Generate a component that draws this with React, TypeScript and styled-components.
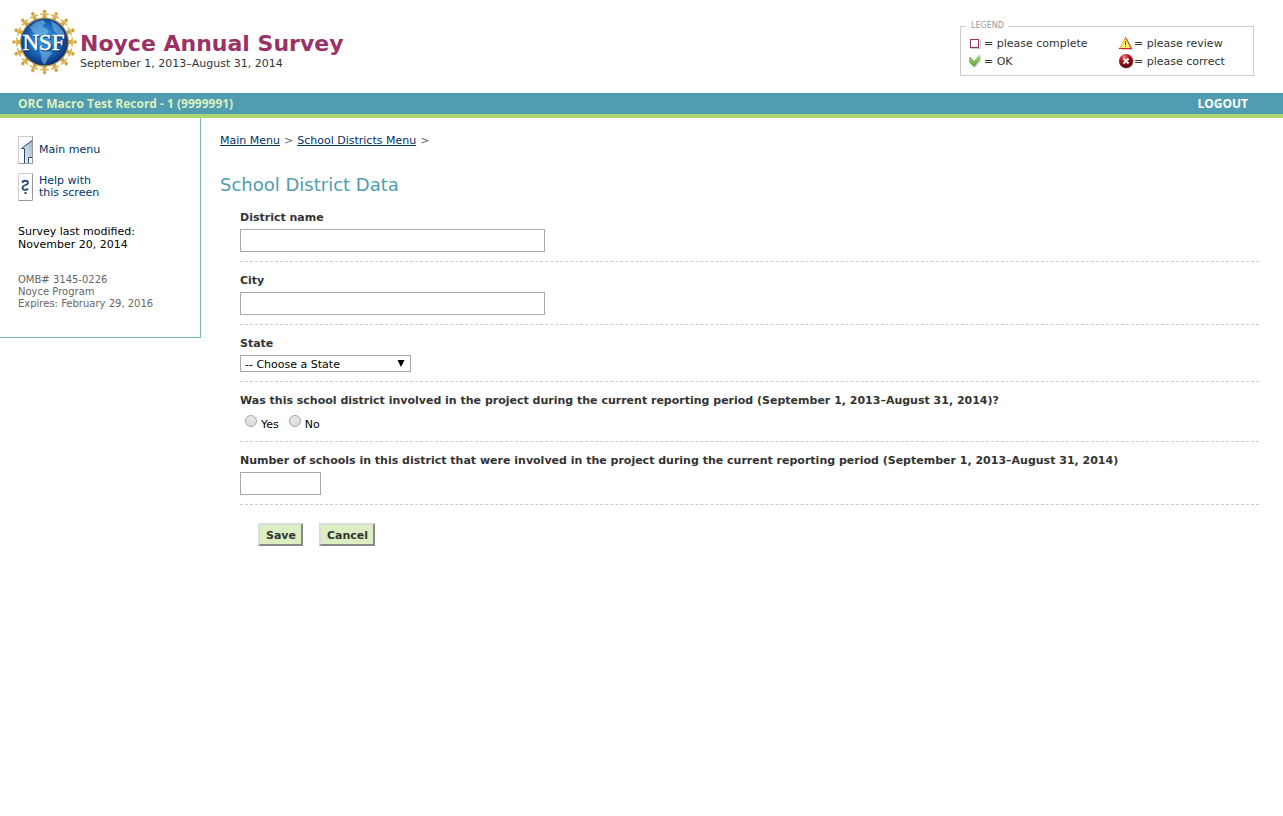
import React from "react";
import styled, { createGlobalStyle } from "styled-components";

const Global = createGlobalStyle`
  * { box-sizing: border-box; }
  body {
    margin: 0;
    background: #fff;
    color: #333;
    font: 11px/13px Verdana, "DejaVu Sans", sans-serif;
  }
  svg { flex: none; }
`;

const Header = styled.header`
  display: flex;
  justify-content: space-between;
  align-items: flex-start;
  height: 93px;
  padding: 8px 29px 0 10px;
`;

const Brand = styled.div`
  display: flex;
`;

const Titles = styled.div`
  padding: 23px 0 0 2px;
`;

const SiteTitle = styled.h1`
  margin: 0;
  color: #993366;
  font-size: 22px;
  line-height: 26px;
`;

const Period = styled.p`
  margin: 0;
`;

const Legend = styled.fieldset`
  display: grid;
  grid-template-columns: 150px auto;
  align-content: start;
  width: 294px;
  height: 57px;
  margin: 11px 0 0;
  padding: 1px 0 0 7px;
  border: 1px solid #ccc;
  color: #333;
`;

const LegendTitle = styled.legend`
  margin: 0 0 0 -2px;
  padding: 0 4px 0 5px;
  color: #999;
  font-size: 8px;
  line-height: 14px;
`;

const LegendItem = styled.div`
  display: flex;
  align-items: center;
  height: 18px;
  white-space: nowrap;
`;

const AccountBar = styled.div`
  display: flex;
  justify-content: space-between;
  align-items: center;
  height: 25px;
  padding: 0 35px 0 18px;
  border-bottom: 4px solid #acd66e;
  background: #509cb0;
  color: #dcf0c0;
  font-family: Tahoma, "Open Sans", sans-serif;
  font-size: 12px;
  font-weight: bold;
`;

const Logout = styled.a`
  color: #fff;
  text-decoration: none;
`;

const Body = styled.div`
  display: flex;
  align-items: flex-start;
`;

const Sidebar = styled.aside`
  flex: none;
  width: 201px;
  padding: 18px 18px 27px;
  border: solid #7ab8b8;
  border-width: 0 1px 1px 0;
`;

const SideLink = styled.a`
  display: flex;
  align-items: center;
  gap: 6px;
  height: 28px;
  margin-bottom: 9px;
  color: #003366;
  line-height: 12px;
  text-decoration: none;
`;

const Modified = styled.p`
  margin: 24px 0 23px;
  color: #000;
`;

const Omb = styled.p`
  margin: 0;
  color: #666;
  font-size: 10px;
  line-height: 12px;
`;

const Main = styled.main`
  flex: 1;
  min-width: 0;
  padding: 16px 24px 0 19px;
`;

const Crumbs = styled.nav`
  display: flex;
  gap: 4px;
  line-height: 14px;
  color: #666;
`;

const CrumbLink = styled.a`
  color: #003366;
`;

const PageTitle = styled.h2`
  margin: 25px 0 3px;
  color: #509cb0;
  font-size: 18px;
  font-weight: normal;
  line-height: 23px;
`;

const Form = styled.form`
  padding-left: 20px;
`;

const Row = styled.div`
  padding: 9px 0;
  border-bottom: 1px dashed #ccc;
`;

const Group = styled.fieldset`
  margin: 0;
  padding: 9px 0;
  border: 0;
  border-bottom: 1px dashed #ccc;
`;

const labelText = `
  display: block;
  margin-bottom: 1px;
  padding: 0;
  font-weight: bold;
  line-height: 20px;
`;

const Label = styled.label`${labelText}`;

const Question = styled.legend`
  ${labelText}
  float: left;
  width: 100%;
`;

const TextInput = styled.input<{ $width: number }>`
  display: block;
  width: ${(p) => p.$width}px;
  max-width: 100%;
  height: 23px;
  padding: 1px 4px;
  border: 1px solid #a9a9a9;
  background: #fff;
  font: inherit;
`;

const SelectWrap = styled.div`
  display: grid;
  align-items: center;
  width: 171px;
  height: 17px;

  > * { grid-area: 1 / 1; }
  > svg { justify-self: end; margin-right: 6px; pointer-events: none; }
`;

const Select = styled.select`
  appearance: none;
  width: 100%;
  height: 17px;
  padding: 1px 18px 0 4px;
  border: 1px solid #a9a9a9;
  border-radius: 0;
  background: #fff;
  color: #000;
  font: inherit;
`;

const Choices = styled.div`
  display: flex;
  clear: both;
  gap: 10px;
  height: 20px;
  padding-left: 5px;
  color: #000;
`;

const Choice = styled.label`
  display: flex;
  align-items: flex-start;
  gap: 4px;
  line-height: 25px;
`;

const Radio = styled.input`
  appearance: none;
  width: 12px;
  height: 12px;
  margin: 3px 0 0;
  border: 1px solid #a4a4a4;
  border-radius: 50%;
  background: linear-gradient(#e8e8e8, #dcdcdc);

  &:checked { background: radial-gradient(#444 35%, #e2e2e2 40%); }
`;

const Actions = styled.div`
  display: flex;
  gap: 16px;
  padding: 18px;
`;

const Button = styled.button`
  height: 23px;
  padding: 1px 5px 0 6px;
  border: 2px solid;
  border-color: #ddd #888 #888 #ddd;
  border-radius: 0;
  background: #dcefc3;
  color: #333;
  font: inherit;
  font-weight: bold;
`;

const figures = Array.from({ length: 16 }, (_, i) => i * 22.5);

const NsfLogo = () => (
  <svg width="68" height="68" viewBox="0 0 68 68" role="img" aria-label="NSF">
    <defs>
      <radialGradient id="globe" cx="48%" cy="45%" r="56%">
        <stop offset="0" stopColor="#48a4e4" />
        <stop offset=".55" stopColor="#1c6fc0" />
        <stop offset="1" stopColor="#0a2c72" />
      </radialGradient>
      <linearGradient id="gold" x2="0" y2="1">
        <stop offset="0" stopColor="#e4c060" />
        <stop offset="1" stopColor="#bc9030" />
      </linearGradient>
    </defs>
    {figures.map((a) => (
      <g key={a} transform={`rotate(${a} 34.500 34)`} fill="url(#gold)">
        <circle cx="34.500" cy="3.200" r="1.800" />
        <path d="M29.800 6 L34.500 4.800 L39.200 6 L39 7 L36.200 7.300 L36.400 9 L39.300 12 H29.700 L32.600 9 L32.800 7.300 L30 7Z" />
      </g>
    ))}
    <circle cx="34.500" cy="34" r="24.500" fill="#caa040" />
    <circle cx="34.500" cy="34" r="23.500" fill="url(#globe)" />
    <path d="M20 19 L26 14 L33 12 L36 15 L32 18 L37 21 L39 24 L35 27 L31 26 L30 29 L26 27 L22 23Z M41 13 L48 17 L53 23 L55 29 L49 27 L44 23Z M29 39 L36 41 L42 45 L38 50 L35 57 L32 54 L31 47Z" fill="#8cc8f0" opacity=".5" />
    <text x="34.500" y="42.500" textAnchor="middle" fill="#0b2a60" stroke="#0b2a60" strokeWidth="1" opacity=".7" fontFamily="Liberation Serif, serif" fontSize="23">NSF</text>
    <text x="33.500" y="41.500" textAnchor="middle" fill="#fff" stroke="#fff" strokeWidth=".5" fontFamily="Liberation Serif, serif" fontSize="23">NSF</text>
  </svg>
);

const CompleteIcon = () => (
  <svg width="16" height="16" viewBox="0 0 16 16" aria-hidden="true">
    <path d="M3 13.500H12.500V5" fill="none" stroke="#ccc" />
    <rect x="2.500" y="4.500" width="8" height="8" fill="#fff" stroke="#993366" />
  </svg>
);

const OkIcon = () => (
  <svg width="16" height="16" viewBox="0 0 16 16" aria-hidden="true">
    <defs>
      <linearGradient id="tick" x2="0" y2="1">
        <stop offset="0" stopColor="#b0dc88" />
        <stop offset="1" stopColor="#5c9c38" />
      </linearGradient>
    </defs>
    <path d="M2 6 L7 10 L13 3 V8 L7 15 L2 10Z" fill="#bbb" opacity=".6" />
    <path d="M1 4 L3 4 L6 8 L12 1 V7 L6 14 L1 9Z" fill="url(#tick)" />
  </svg>
);

const ReviewIcon = () => (
  <svg width="16" height="16" viewBox="0 0 16 16" aria-hidden="true">
    <path d="M9 3 L15.500 15 H3Z" fill="#bbb" opacity=".6" />
    <path d="M7.500 2.500 L13.500 13.500 H1.500Z" fill="#ffee70" />
    <path d="M1.500 13.500 L7.500 2.500" fill="none" stroke="#f0a840" />
    <path d="M7.500 2.500 L13.500 13.500 H1" fill="none" stroke="#d02820" />
    <path d="M7 6H8V10H7Z M7 11H8V12H7Z" fill="#742" />
  </svg>
);

const CorrectIcon = () => (
  <svg width="16" height="16" viewBox="0 0 16 16" aria-hidden="true">
    <defs>
      <radialGradient id="ball" cx="38%" cy="20%" r="80%">
        <stop offset="0" stopColor="#f08080" />
        <stop offset=".4" stopColor="#b81420" />
        <stop offset="1" stopColor="#500008" />
      </radialGradient>
    </defs>
    <circle cx="9" cy="9" r="7" fill="#bbb" opacity=".6" />
    <circle cx="8" cy="8" r="7" fill="url(#ball)" />
    <path d="M5.500 5.500 L10.500 10.500 M10.500 5.500 L5.500 10.500" stroke="#fff" strokeWidth="1.800" />
  </svg>
);

const HomeIcon = () => (
  <svg width="15" height="28" viewBox="0 0 15 28" aria-hidden="true">
    <defs>
      <linearGradient id="house" x1="1" x2="0" y2="1">
        <stop offset="0" stopColor="#9fb2c8" />
        <stop offset="1" stopColor="#f4f7fa" />
      </linearGradient>
    </defs>
    <path d="M.5 27.500V.5H14.500" fill="none" stroke="#ccc" />
    <path d="M.5 27.500H14.500V.5" fill="none" stroke="#999" />
    <path d="M3.500 12.500 L14 4 V21 H10 V27 H6.500 V12.500Z" fill="url(#house)" />
    <path d="M14 4.500 L3.500 12.500 H6.500 V27 M10.500 27 V21.500 H14" fill="none" stroke="#1f4a78" />
  </svg>
);

const HelpIcon = () => (
  <svg width="15" height="28" viewBox="0 0 15 28" aria-hidden="true">
    <path d="M.5 27.500V.5H14.500" fill="none" stroke="#ccc" />
    <path d="M.5 27.500H14.500V.5" fill="none" stroke="#999" />
    <path d="M4.500 10 C4.500 7 10 7 10 10 C10 12.500 4.500 11.500 4.500 14.500 C4.500 17.500 9 17.500 10 15.500" fill="none" stroke="#1f4a78" strokeWidth="1.800" />
    <path d="M6.500 19H8.500V21H6.500Z" fill="#1f4a78" />
  </svg>
);

export default function App() {
  return (
    <>
      <Global />
      <Header>
        <Brand>
          <NsfLogo />
          <Titles>
            <SiteTitle>Noyce Annual Survey</SiteTitle>
            <Period>September 1, 2013–August 31, 2014</Period>
          </Titles>
        </Brand>
        <Legend>
          <LegendTitle>LEGEND</LegendTitle>
          <LegendItem><CompleteIcon />= please complete</LegendItem>
          <LegendItem><ReviewIcon />= please review</LegendItem>
          <LegendItem><OkIcon />= OK</LegendItem>
          <LegendItem><CorrectIcon />= please correct</LegendItem>
        </Legend>
      </Header>
      <AccountBar>
        <span>ORC Macro Test Record - 1 (9999991)</span>
        <Logout href="#logout">LOGOUT</Logout>
      </AccountBar>
      <Body>
        <Sidebar>
          <SideLink href="#menu"><HomeIcon />Main menu</SideLink>
          <SideLink href="#help"><HelpIcon /><span>Help with<br />this screen</span></SideLink>
          <Modified>Survey last modified:<br />November 20, 2014</Modified>
          <Omb>OMB# 3145-0226<br />Noyce Program<br />Expires: February 29, 2016</Omb>
        </Sidebar>
        <Main>
          <Crumbs aria-label="Breadcrumb">
            <CrumbLink href="#menu">Main Menu</CrumbLink>
            <span>&gt;</span>
            <CrumbLink href="#districts">School Districts Menu</CrumbLink>
            <span>&gt;</span>
          </Crumbs>
          <PageTitle>School District Data</PageTitle>
          <Form onSubmit={(e) => e.preventDefault()}>
            <Row>
              <Label htmlFor="district">District name</Label>
              <TextInput id="district" type="text" $width={305} />
            </Row>
            <Row>
              <Label htmlFor="city">City</Label>
              <TextInput id="city" type="text" $width={305} />
            </Row>
            <Row>
              <Label htmlFor="state">State</Label>
              <SelectWrap>
                <Select id="state"><option>-- Choose a State</option></Select>
                <svg width="8" height="7" viewBox="0 0 8 7" aria-hidden="true">
                  <path d="M.5 0H7.500L4 7Z" fill="#000" />
                </svg>
              </SelectWrap>
            </Row>
            <Group>
              <Question>Was this school district involved in the project during the current reporting period (September 1, 2013–August 31, 2014)?</Question>
              <Choices>
                <Choice><Radio type="radio" name="involved" value="yes" />Yes</Choice>
                <Choice><Radio type="radio" name="involved" value="no" />No</Choice>
              </Choices>
            </Group>
            <Row>
              <Label htmlFor="schools">Number of schools in this district that were involved in the project during the current reporting period (September 1, 2013–August 31, 2014)</Label>
              <TextInput id="schools" type="text" $width={81} />
            </Row>
            <Actions>
              <Button type="submit">Save</Button>
              <Button type="button">Cancel</Button>
            </Actions>
          </Form>
        </Main>
      </Body>
    </>
  );
}
